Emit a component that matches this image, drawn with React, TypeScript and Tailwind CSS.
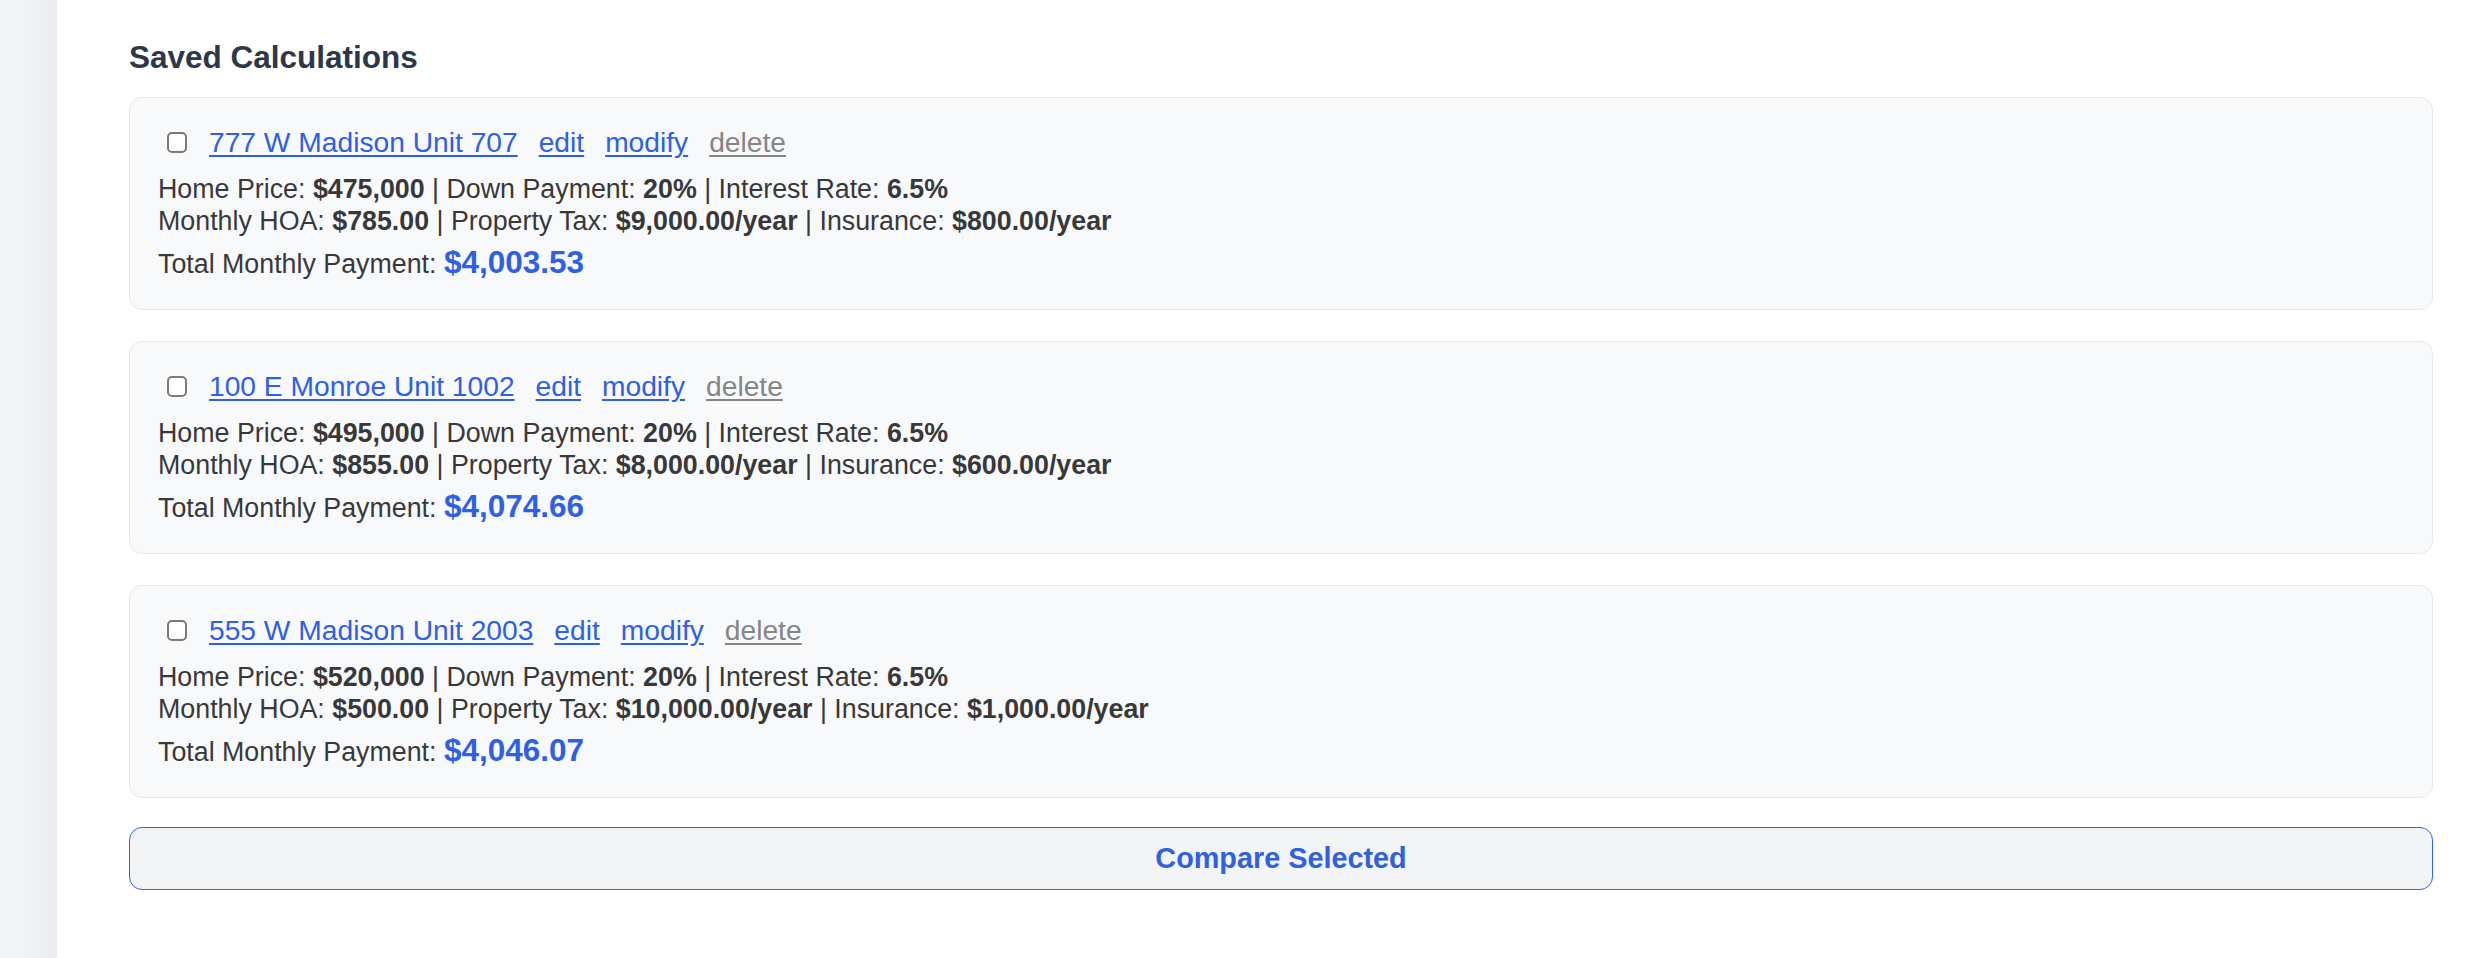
import React from 'react';

type Calc = {
  id: number;
  address: string;
  price: string;
  down: string;
  rate: string;
  hoa: string;
  tax: string;
  insurance: string;
  total: string;
};

const savedCalcs: Calc[] = [
  { id: 1, address: "777 W Madison Unit 707", price: "$475,000", down: "20%", rate: "6.5%", hoa: "$785.00", tax: "$9,000.00/year", insurance: "$800.00/year", total: "$4,003.53" },
  { id: 2, address: "100 E Monroe Unit 1002", price: "$495,000", down: "20%", rate: "6.5%", hoa: "$855.00", tax: "$8,000.00/year", insurance: "$600.00/year", total: "$4,074.66" },
  { id: 3, address: "555 W Madison Unit 2003", price: "$520,000", down: "20%", rate: "6.5%", hoa: "$500.00", tax: "$10,000.00/year", insurance: "$1,000.00/year", total: "$4,046.07" },
];

function CalcCard({ calc }: { calc: Calc }) {
  return (
    <div className="bg-[#f8f9fb] border border-[#e5e7eb] rounded-[13px] pt-[28px] pb-[28px] px-[28px]">
      {/* header row: checkbox + links */}
      <div className="flex items-center h-[33px] text-[28.2px] leading-[33px]">
        <input
          type="checkbox"
          className="appearance-none w-[20px] h-[21px] ml-[9px] mr-[22px] border-2 border-[#7a7a7a] rounded-[5px] bg-white shrink-0"
        />
        <a href="#" className="text-[#2f60e3] underline underline-offset-[3px]">{calc.address}</a>
        <a href="#" className="ml-[21px] text-[#2f60e3] underline underline-offset-[3px]">edit</a>
        <a href="#" className="ml-[21px] text-[#2f60e3] underline underline-offset-[3px]">modify</a>
        <a href="#" className="ml-[21px] text-[#858585] underline underline-offset-[3px]">delete</a>
      </div>

      {/* details */}
      <div className="mt-[15px] text-[26.8px] leading-[31.5px] text-[#383838]">
        <div>
          Home Price: <b>{calc.price}</b> | Down Payment: <b>{calc.down}</b> | Interest Rate: <b>{calc.rate}</b>
        </div>
        <div>
          Monthly HOA: <b>{calc.hoa}</b> | Property Tax: <b>{calc.tax}</b> | Insurance: <b>{calc.insurance}</b>
        </div>
      </div>

      <div className="mt-[7px] text-[26.8px] leading-[37px] h-[37px] text-[#383838]">
        Total Monthly Payment: <span className="text-[31.5px] font-bold text-[#2f60e3]">{calc.total}</span>
      </div>
    </div>
  );
}

export default function App() {
  return (
    <div className="flex min-h-screen bg-white" style={{ fontFamily: '"Liberation Sans", Arial, sans-serif' }}>
      {/* left edge of sidebar */}
      <aside className="w-[57px] shrink-0 bg-gradient-to-r from-[#f4f5f7] via-[#f2f3f5] to-[#eaecef]" />

      <main className="flex-1 pl-[72px] pr-[57px] pt-[39px] pb-[66px]">
        <h2 className="text-[31.5px] leading-[37px] font-bold text-[#2d3748] mb-[21px]">Saved Calculations</h2>

        <div className="flex flex-col gap-[31px]">
          {savedCalcs.map((c) => (
            <CalcCard key={c.id} calc={c} />
          ))}
        </div>

        <button className="mt-[29px] w-full h-[63px] bg-[#f3f4f6] border-[1.5px] border-[#3563e6] rounded-[13px] text-[28.8px] font-bold text-[#2f60e3]">
          Compare Selected
        </button>
      </main>
    </div>
  );
}
